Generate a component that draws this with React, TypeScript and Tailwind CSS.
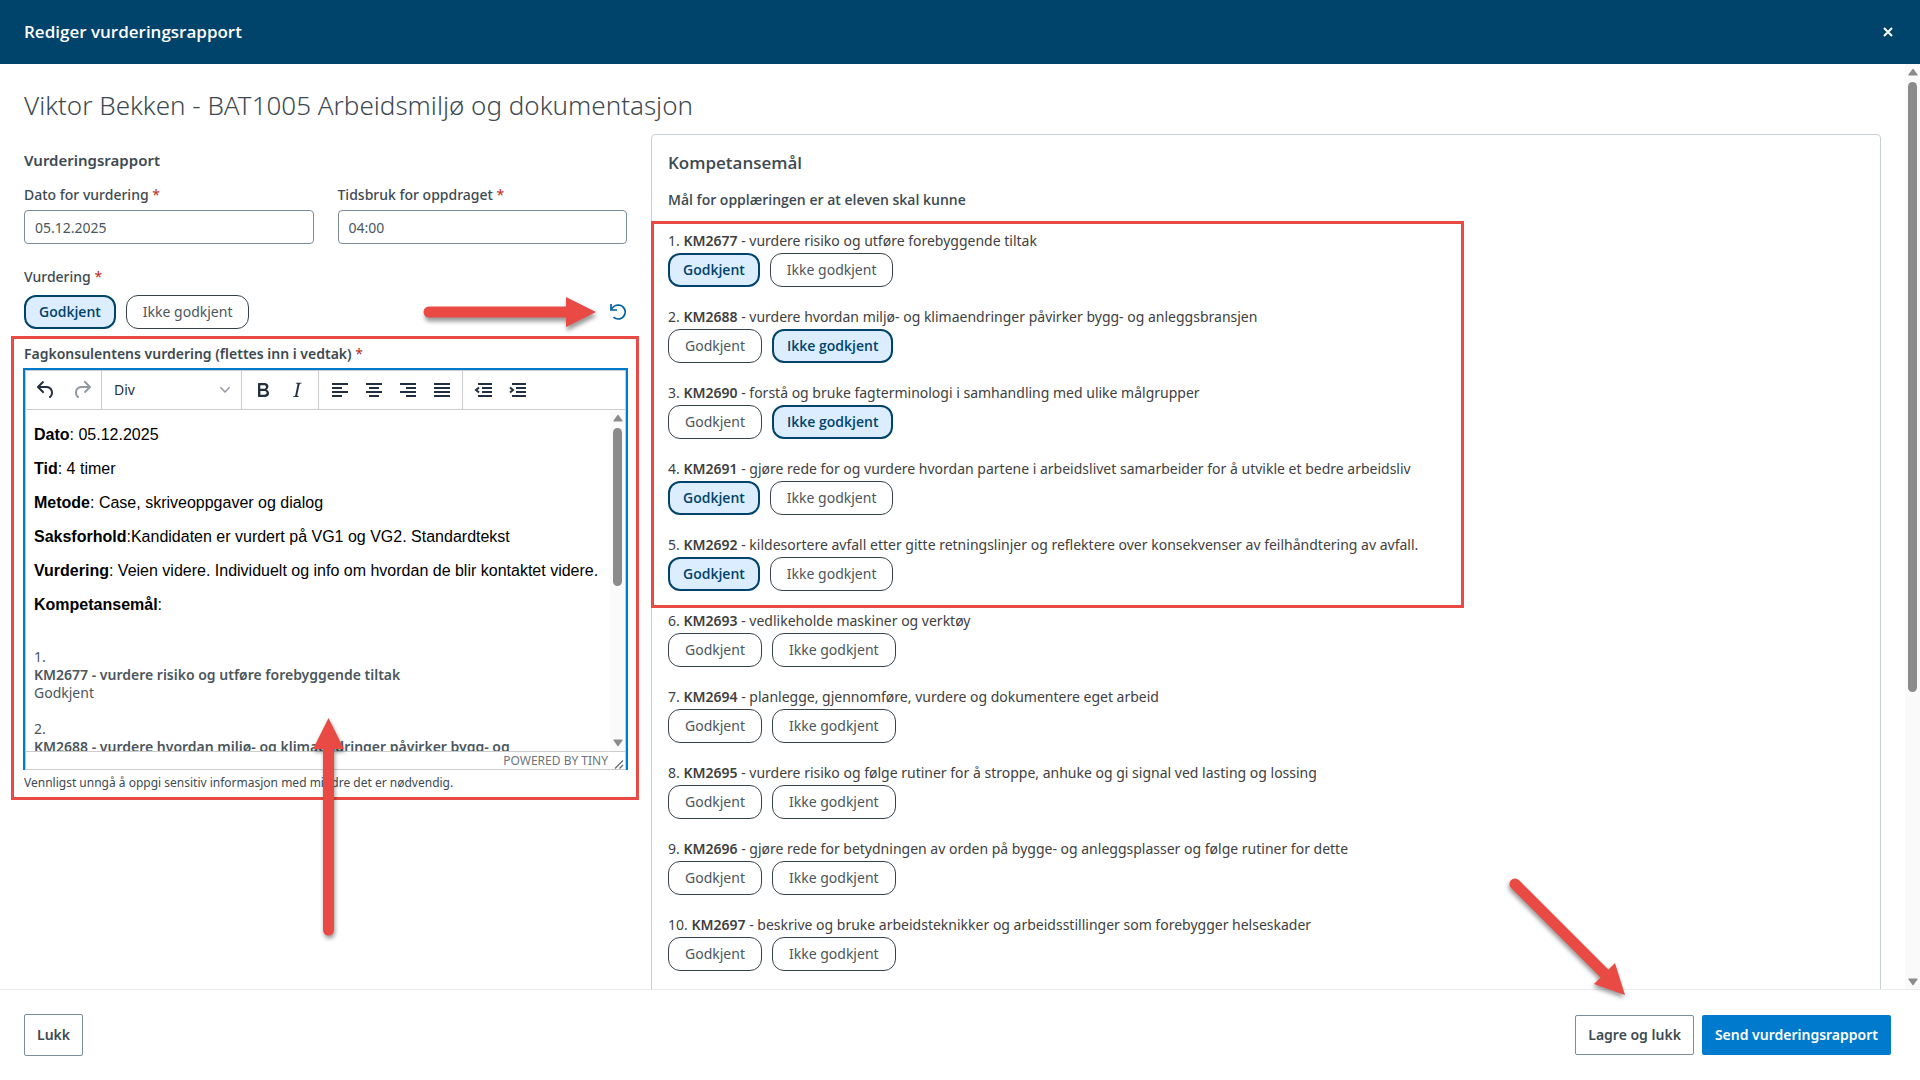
import React, { useState } from "react";

type Verdict = "ok" | "not" | null;
type Goal = { code: string; text: string; verdict: Verdict };

const GOALS: Goal[] = [
  { code: "KM2677", text: "vurdere risiko og utføre forebyggende tiltak", verdict: "ok" },
  { code: "KM2688", text: "vurdere hvordan miljø- og klimaendringer påvirker bygg- og anleggsbransjen", verdict: "not" },
  { code: "KM2690", text: "forstå og bruke fagterminologi i samhandling med ulike målgrupper", verdict: "not" },
  { code: "KM2691", text: "gjøre rede for og vurdere hvordan partene i arbeidslivet samarbeider for å utvikle et bedre arbeidsliv", verdict: "ok" },
  { code: "KM2692", text: "kildesortere avfall etter gitte retningslinjer og reflektere over konsekvenser av feilhåndtering av avfall.", verdict: "ok" },
  { code: "KM2693", text: "vedlikeholde maskiner og verktøy", verdict: null },
  { code: "KM2694", text: "planlegge, gjennomføre, vurdere og dokumentere eget arbeid", verdict: null },
  { code: "KM2695", text: "vurdere risiko og følge rutiner for å stroppe, anhuke og gi signal ved lasting og lossing", verdict: null },
  { code: "KM2696", text: "gjøre rede for betydningen av orden på bygge- og anleggsplasser og følge rutiner for dette", verdict: null },
  { code: "KM2697", text: "beskrive og bruke arbeidsteknikker og arbeidsstillinger som forebygger helseskader", verdict: null },
];

function Choice({ on, onClick, children }: { on: boolean; onClick: () => void; children: React.ReactNode }) {
  return (
    <button
      type="button"
      aria-pressed={on}
      onClick={onClick}
      className={
        on
          ? "h-[34px] rounded-xl border-2 border-[#00436b] bg-[#dbedff] px-[13px] font-['Open_Sans',sans-serif] text-sm font-semibold text-[#00436b]"
          : "h-[34px] rounded-xl border border-[#36424a] bg-white px-4 text-sm text-[#4b565d]"
      }
    >
      {children}
    </button>
  );
}

function Verdicts({ initial, label }: { initial: Verdict; label: string }) {
  const [value, setValue] = useState<Verdict>(initial);
  return (
    <div role="group" aria-label={label} className="flex gap-[10px]">
      <Choice on={value === "ok"} onClick={() => setValue("ok")}>Godkjent</Choice>
      <Choice on={value === "not"} onClick={() => setValue("not")}>Ikke godkjent</Choice>
    </div>
  );
}

function GoalRow({ goal, index }: { goal: Goal; index: number }) {
  return (
    <li className="flex flex-col gap-[2px]">
      <p className="text-sm leading-5 text-[#404040]">
        {index}. <span className="font-semibold">{goal.code}</span> - {goal.text}
      </p>
      <Verdicts initial={goal.verdict} label={goal.code} />
    </li>
  );
}

function Star() {
  return <span className="font-normal text-[#b92b27]">*</span>;
}

function Arrow({ className, w, h, d, line }: { className: string; w: number; h: number; d: string; line: string }) {
  return (
    <svg aria-hidden="true" width={w} height={h} viewBox={`0 0 ${w} ${h}`} className={className}>
      <path d={line} stroke="#e94b44" strokeWidth="11" strokeLinecap="round" fill="none" />
      <path d={d} fill="#e94b44" />
    </svg>
  );
}

function Tool({ label, faded, children }: { label: string; faded?: boolean; children: React.ReactNode }) {
  return (
    <button
      type="button"
      aria-label={label}
      className={
        faded
          ? "flex h-7 w-[34px] items-center justify-center text-[#9299a1]"
          : "flex h-7 w-[34px] items-center justify-center text-[#222f3e]"
      }
    >
      <svg width="24" height="24" viewBox="0 0 24 24" fill="currentColor">{children}</svg>
    </button>
  );
}

function Lines({ d }: { d: string }) {
  return <path d={d} stroke="currentColor" strokeWidth="2" fill="none" />;
}

function Toolbar() {
  return (
    <div role="toolbar" aria-label="Formatering" className="flex h-[39px] shrink-0 items-stretch border-b border-[#ccc]">
      <div className="flex w-[76px] items-center justify-center gap-[2px] border-r border-[#ccc]">
        <Tool label="Angre">
          <path d="M6.4 8H12c3.7 0 6.2 2 6.8 5.1.6 2.7-.4 5.6-2.3 6.8a1 1 0 0 1-1-1.8c1.1-.6 1.8-2.7 1.4-4.6-.5-2.1-2.1-3.5-4.9-3.5H6.4l3.3 3.3a1 1 0 1 1-1.4 1.4l-5-5a1 1 0 0 1 0-1.4l5-5a1 1 0 0 1 1.4 1.4L6.4 8Z" />
        </Tool>
        <Tool label="Gjør om" faded>
          <path d="M17.6 10H12c-2.8 0-4.4 1.4-4.9 3.5-.4 2 .3 4 1.4 4.6a1 1 0 1 1-1 1.8c-2-1.2-2.9-4.1-2.3-6.8.6-3 3-5.1 6.8-5.1h5.6l-3.3-3.3a1 1 0 1 1 1.4-1.4l5 5a1 1 0 0 1 0 1.4l-5 5a1 1 0 0 1-1.4-1.4l3.3-3.3Z" />
        </Tool>
      </div>
      <label className="relative flex w-[140px] items-center border-r border-[#ccc]">
        <span className="sr-only">Blokkformat</span>
        <select className="h-full w-full appearance-none bg-transparent pl-3 text-sm text-[#222f3e]">
          <option>Div</option>
        </select>
        <svg aria-hidden="true" width="10" height="10" viewBox="0 0 10 10" className="pointer-events-none absolute right-[11px]">
          <path d="M.8 2.8 5 7l4.200-4.200" stroke="#9299a1" strokeWidth="1.500" fill="none" strokeLinecap="round" strokeLinejoin="round" />
        </svg>
      </label>
      <div className="flex w-[77px] items-center justify-center border-r border-[#ccc]">
        <Tool label="Fet">
          <path d="M7.8 19c-.3 0-.5 0-.6-.2l-.2-.5V5.700c0-.2 0-.4.2-.5l.6-.2h5c1.500 0 2.700.3 3.500 1 .7.6 1.100 1.400 1.100 2.500a3 3 0 0 1-.6 1.900c-.4.6-1 1-1.600 1.200.4.1.9.3 1.300.6s.8.7 1 1.200c.4.4.5 1 .5 1.600 0 1.300-.4 2.300-1.300 3-.8.7-2.100 1-3.800 1H7.800Zm5-8.300c.6 0 1.200-.1 1.600-.5.4-.3.6-.7.6-1.300 0-1.100-.8-1.700-2.300-1.700H9.300v3.500h3.400Zm.5 6c.7 0 1.300-.1 1.700-.4.4-.4.6-.9.6-1.500s-.2-1-.7-1.400c-.4-.3-1-.4-2-.4H9.400v3.800h4Z" />
        </Tool>
        <Tool label="Kursiv">
          <path d="m16.700 4.700-.1.9h-.3c-.6 0-1 0-1.400.3-.3.3-.4.6-.5 1.100l-2.100 9.800v.6c0 .5.4.8 1.400.8h.2l-.2.8H8l.2-.8h.2c1.100 0 1.800-.5 2-1.500l2-9.800.1-.5c0-.6-.4-.8-1.400-.8h-.3l.2-.9h5.700Z" />
        </Tool>
      </div>
      <div className="flex w-[144px] items-center justify-center border-r border-[#ccc]">
        <Tool label="Venstrejuster"><Lines d="M4 6h16M4 10h10M4 14h16M4 18h10" /></Tool>
        <Tool label="Midtstill"><Lines d="M4 6h16M7 10h10M4 14h16M7 18h10" /></Tool>
        <Tool label="Høyrejuster"><Lines d="M4 6h16M10 10h10M4 14h16M10 18h10" /></Tool>
        <Tool label="Blokkjuster"><Lines d="M4 6h16M4 10h16M4 14h16M4 18h16" /></Tool>
      </div>
      <div className="flex items-center pl-1">
        <Tool label="Reduser innrykk">
          <Lines d="M6 6h14M10 10h10M10 14h10M6 18h14" />
          <path d="M7 9.500 4 12l3 2.500" stroke="currentColor" strokeWidth="2" fill="none" />
        </Tool>
        <Tool label="Øk innrykk">
          <Lines d="M6 6h14M10 10h10M10 14h10M6 18h14" />
          <path d="M4 9.500 7 12l-3 2.500" stroke="currentColor" strokeWidth="2" fill="none" />
        </Tool>
      </div>
    </div>
  );
}

function Triangle({ down }: { down?: boolean }) {
  return (
    <svg aria-hidden="true" width="10" height="8" viewBox="0 0 10 8" className="shrink-0">
      <path d={down ? "M1 .5h8a.6.6 0 0 1 .5 1L5.500 7a.7.7 0 0 1-1 0L.5 1.500a.6.6 0 0 1 .5-1Z" : "M1 7.500h8a.6.6 0 0 0 .5-1L5.500 1a.7.7 0 0 0-1 0L.5 6.500a.6.6 0 0 0 .5 1Z"} fill="#8b8b8b" />
    </svg>
  );
}

function Editor() {
  return (
    <div className="-mx-px mt-1 flex h-[402px] flex-col border-2 border-b-0 border-[#007acc]">
      <div className="flex min-h-0 flex-1 flex-col border border-[#ccc]">
        <Toolbar />
        <div className="flex min-h-0 flex-1">
          <div
            role="textbox"
            aria-labelledby="assessment-label"
            aria-multiline="true"
            tabIndex={0}
            className="flex-1 overflow-hidden pt-4 pl-2 font-['Liberation_Sans',sans-serif] text-base leading-[18px] text-black"
          >
            <div className="flex flex-col gap-4">
              <p><b>Dato</b>: 05.12.2025</p>
              <p><b>Tid</b>: 4 timer</p>
              <p><b>Metode</b>: Case, skriveoppgaver og dialog</p>
              <p><b>Saksforhold</b>:Kandidaten er vurdert på VG1 og VG2. Standardtekst</p>
              <p><b>Vurdering</b>: Veien videre. Individuelt og info om hvordan de blir kontaktet videre.</p>
              <p><b>Kompetansemål</b>:</p>
            </div>
            <div className="mt-[34px] flex flex-col gap-[18px] pr-2 font-['Noto_Sans',sans-serif] text-sm leading-[18px] text-[#4b565d]">
              <div>
                <p>1.</p>
                <p className="font-semibold">KM2677 - vurdere risiko og utføre forebyggende tiltak</p>
                <p>Godkjent</p>
              </div>
              <div>
                <p>2.</p>
                <p className="font-semibold">KM2688 - vurdere hvordan miljø- og klimaendringer påvirker bygg- og anleggsbransjen</p>
              </div>
            </div>
          </div>
          <div className="flex w-[15px] flex-col items-center bg-[#fafafa] py-1">
            <Triangle />
            <div className="mt-[6px] h-[158px] w-[9px] rounded-full bg-[#8b8b8b]" />
            <div className="flex-1" />
            <Triangle down />
          </div>
        </div>
        <div className="flex h-[18px] shrink-0 items-center justify-end border-t border-[#ccc] text-xs leading-4 text-[#6b747c]">
          <a href="#tiny">POWERED BY TINY</a>
          <svg aria-hidden="true" width="10" height="10" viewBox="0 0 10 10" className="mr-px ml-[6px] self-end">
            <path d="M1 9.500 9 1.500M5.500 9.500 9 6" stroke="#59646e" strokeWidth="1.200" />
          </svg>
        </div>
      </div>
    </div>
  );
}

function Field({ id, label, value }: { id: string; label: string; value: string }) {
  return (
    <div className="flex flex-col gap-[5px]">
      <label htmlFor={id} className="text-sm leading-5 font-medium">
        {label} <Star />
      </label>
      <input
        id={id}
        defaultValue={value}
        className="h-[34px] w-full rounded border border-[#7b8c9c] bg-white px-[10px] text-sm text-[#4b565d]"
      />
    </div>
  );
}

export default function App() {
  return (
    <div className="flex h-screen flex-col bg-white font-['Noto_Sans',sans-serif] text-[#3d4a52]">
      <header className="flex h-16 shrink-0 items-center justify-between bg-[#00436b] px-6 text-white">
        <h1 className="font-['Open_Sans',sans-serif] text-[17px] font-semibold">Rediger vurderingsrapport</h1>
        <button type="button" aria-label="Lukk vindu" className="flex h-6 w-4 items-center justify-center">
          <svg width="10" height="10" viewBox="0 0 10 10">
            <path d="m1 1 8 8M9 1 1 9" stroke="currentColor" strokeWidth="2" />
          </svg>
        </button>
      </header>

      <div className="flex min-h-0 flex-1">
        <main className="flex-1 overflow-hidden px-6 pt-6">
          <h2 className="text-[26px] leading-[34px] font-light">Viktor Bekken - BAT1005 Arbeidsmiljø og dokumentasjon</h2>
          <div className="mt-3 grid grid-cols-[603fr_1230fr] items-start gap-6">
            <form className="flex min-w-0 flex-col pt-[15px]">
              <h3 className="text-[15px] leading-[22px] font-semibold">Vurderingsrapport</h3>
              <div className="mt-[14px] grid grid-cols-2 gap-6">
                <Field id="date" label="Dato for vurdering" value="05.12.2025" />
                <Field id="time" label="Tidsbruk for oppdraget" value="04:00" />
              </div>

              <p className="mt-[23px] text-sm leading-5 font-medium">
                Vurdering <Star />
              </p>
              <div className="mt-2 flex items-center">
                <Verdicts initial="ok" label="Vurdering" />
                <Arrow
                  className="mr-[13px] ml-auto overflow-visible drop-shadow-[1px_4px_2px_rgba(0,0,0,0.4)]"
                  w={173}
                  h={30}
                  line="M6 15H150"
                  d="M143 0 173 15 143 30Z"
                />
                <button type="button" aria-label="Tilbakestill" className="text-[#0062a3]">
                  <svg width="18" height="18" viewBox="0 0 18 18" fill="none" stroke="currentColor" strokeWidth="1.700">
                    <path d="M2 1v6h6" />
                    <path d="M2.300 6.600C4 3.500 6.500 2 9.500 2a7 7 0 1 1-5 12.200" />
                  </svg>
                </button>
              </div>

              <section className="relative mt-[15px]">
                <p id="assessment-label" className="text-sm leading-5 font-semibold">
                  Fagkonsulentens vurdering (flettes inn i vedtak) <Star />
                </p>
                <Editor />
                <p className="mt-[5px] text-xs leading-4">Vennligst unngå å oppgi sensitiv informasjon med mindre det er nødvendig.</p>
                <div className="pointer-events-none absolute -top-2 -right-3 -bottom-[9px] -left-[13px] border-3 border-[#e94b44]" />
                <Arrow
                  className="pointer-events-none absolute top-[374px] left-[289px] overflow-visible drop-shadow-[1px_3px_2px_rgba(0,0,0,0.4)]"
                  w={31}
                  h={218}
                  line="M15.500 25V212"
                  d="M15.500 0 31 31H0Z"
                />
              </section>
            </form>

            <section className="min-w-0 rounded border border-[#c8d0d4] px-4 pt-4 pb-24">
              <h3 className="font-['Open_Sans',sans-serif] text-[17px] leading-6 font-semibold">Kompetansemål</h3>
              <p className="mt-[15px] font-['Open_Sans',sans-serif] text-sm leading-5 font-semibold">Mål for opplæringen er at eleven skal kunne</p>
              <div className="relative mt-[21px]">
                <ol className="flex flex-col gap-5">
                  {GOALS.slice(0, 5).map((g, i) => (
                    <GoalRow key={g.code} goal={g} index={i + 1} />
                  ))}
                </ol>
                <div className="pointer-events-none absolute -top-[10px] -bottom-[17px] -left-[17px] w-[813px] border-3 border-[#e94b44]" />
              </div>
              <ol start={6} className="mt-5 flex flex-col gap-5">
                {GOALS.slice(5).map((g, i) => (
                  <GoalRow key={g.code} goal={g} index={i + 6} />
                ))}
              </ol>
            </section>
          </div>
        </main>
        <div className="flex w-[15px] shrink-0 flex-col items-center bg-[#fafafa] pt-1 pb-[3px]">
          <Triangle />
          <div className="mt-[6px] h-[610px] w-[9px] rounded-full bg-[#8b8b8b]" />
          <div className="flex-1" />
          <Triangle down />
        </div>
      </div>

      <footer className="relative z-10 flex h-[91px] shrink-0 items-center justify-between border-t border-[#e9ebec] pr-[29px] pl-6 text-sm font-semibold">
        <button type="button" className="h-[42px] rounded-xs border border-[#7b8c9c] bg-white px-3">Lukk</button>
        <div className="relative flex gap-2">
          <Arrow
            className="pointer-events-none absolute -top-[137px] -left-[66px] overflow-visible drop-shadow-[-1px_3px_2px_rgba(0,0,0,0.4)]"
            w={118}
            h={118}
            line="M6 6 97 97"
            d="M116 117 106 85 85 106Z"
          />
          <button type="button" className="h-10 rounded-xs border border-[#7b8c9c] bg-white px-3">Lagre og lukk</button>
          <button type="button" className="h-10 rounded-xs bg-[#007acc] px-[13px] text-white">Send vurderingsrapport</button>
        </div>
      </footer>
    </div>
  );
}
